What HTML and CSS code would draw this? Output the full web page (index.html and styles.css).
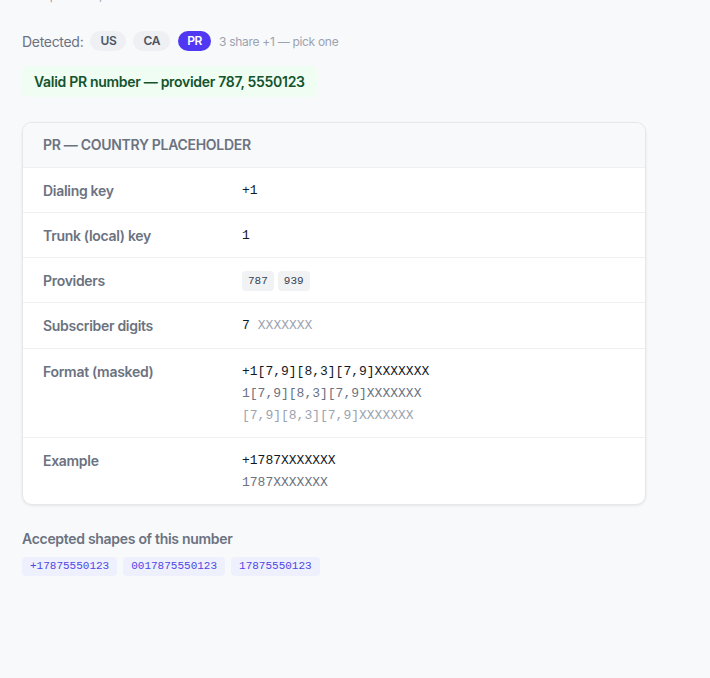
FILE: index.html
```html
<!DOCTYPE html>
<html lang="en">
<head>
    <meta charset="UTF-8">
    <meta name="viewport" content="width=device-width, initial-scale=1.0">
    <title>Dial code lookup</title>
    <link rel="stylesheet" href="styles.css">
</head>
<body>
    <div class="page">
        <p class="accepts">Accepts +ccN, 00ccN or bare ccN</p>

        <div class="detected">
            <span class="detected-label">Detected:</span>
            <span class="chip">US</span>
            <span class="chip">CA</span>
            <span class="chip active">PR</span>
            <span class="detected-hint">3 share +1 — pick one</span>
        </div>

        <div class="status">Valid PR number — provider 787, 5550123</div>

        <div class="card">
            <div class="card-head">PR — Country placeholder</div>
            <div class="row">
                <div class="label">Dialing key</div>
                <div class="value"><div class="mono">+1</div></div>
            </div>
            <div class="row">
                <div class="label">Trunk (local) key</div>
                <div class="value"><div class="mono">1</div></div>
            </div>
            <div class="row">
                <div class="label">Providers</div>
                <div class="value providers">
                    <span class="tag">787</span>
                    <span class="tag">939</span>
                </div>
            </div>
            <div class="row">
                <div class="label">Subscriber digits</div>
                <div class="value subs">
                    <span class="mono">7</span>
                    <span class="mono faint">XXXXXXX</span>
                </div>
            </div>
            <div class="row">
                <div class="label">Format (masked)</div>
                <div class="value">
                    <div class="mono">+1[7,9][8,3][7,9]XXXXXXX</div>
                    <div class="mono muted">1[7,9][8,3][7,9]XXXXXXX</div>
                    <div class="mono faint">[7,9][8,3][7,9]XXXXXXX</div>
                </div>
            </div>
            <div class="row">
                <div class="label">Example</div>
                <div class="value">
                    <div class="mono">+1787XXXXXXX</div>
                    <div class="mono muted">1787XXXXXXX</div>
                </div>
            </div>
        </div>

        <h3 class="shapes-title">Accepted shapes of this number</h3>
        <div class="shapes">
            <span class="shape">+17875550123</span>
            <span class="shape">0017875550123</span>
            <span class="shape">17875550123</span>
        </div>
    </div>
</body>
</html>
```

FILE: styles.css
```css
/* Page */
body {
    margin: 0;
    background: #f8f9fb;
    font-family: Inter, "Noto Sans", sans-serif;
    letter-spacing: -0.3px;
    color: #111827;
    overflow: hidden;
}

.page {
    padding: 0 22px;
    width: 624px;
}

.accepts {
    margin: -12px 0 0;
    font-size: 12px;
    line-height: 16px;
    color: #9ca3af;
}

/* Detected countries */
.detected {
    display: flex;
    align-items: center;
    gap: 7px;
    margin-top: 27px;
    height: 20px;
}
.detected-label {
    font-size: 14px;
    color: #6b7280;
}
.chip {
    font-size: 12px;
    font-weight: 600;
    color: #4b5563;
    background: #eff0f3;
    border-radius: 10px;
    padding: 0 10px;
    line-height: 20px;
}
.chip.active {
    background: #5038f2;
    color: #fff;
    padding: 0 9px;
    margin-left: 1px;
}
.detected-hint {
    font-size: 12px;
    color: #9ca3af;
    margin-left: 1px;
}

.status {
    width: fit-content;
    margin-top: 15px;
    padding: 6px 12px;
    line-height: 19px;
    font-size: 14px;
    font-weight: 600;
    color: #14532d;
    background: #effdf3;
    border-radius: 6px;
}

/* Card */
.card {
    margin-top: 25px;
    background: #fff;
    border: 1px solid #e5e7eb;
    border-radius: 10px;
    box-shadow: 0 1px 3px rgba(0, 0, 0, 0.08);
    overflow: hidden;
}
.card-head {
    background: #f8f9fb;
    padding: 11px 20px 12px;
    line-height: 21px;
    font-size: 14px;
    font-weight: 600;
    text-transform: uppercase;
    color: #6b7280;
    border-bottom: 1px solid #eef0f2;
}
.row {
    display: grid;
    grid-template-columns: 199px 1fr;
    padding: 12px 20px 11px;
    border-bottom: 1px solid #eef0f2;
}
.row:last-child {
    border-bottom: none;
}
.label {
    font-size: 14px;
    font-weight: 600;
    color: #6b7280;
    line-height: 21px;
}
.value {
    display: flex;
    flex-direction: column;
    gap: 1px;
    letter-spacing: 0;
}
.mono {
    font-family: "Liberation Mono", "DejaVu Sans Mono", monospace;
    font-size: 13px;
    line-height: 21px;
    color: #111827;
}
.mono.muted {
    color: #6b7280;
}
.mono.faint {
    color: #9ca3af;
}

.providers {
    flex-direction: row;
    align-items: center;
    gap: 4px;
}
.tag {
    font-family: "Liberation Mono", "DejaVu Sans Mono", monospace;
    font-size: 11px;
    line-height: 20px;
    padding: 0 6px;
    color: #374151;
    background: #f1f2f4;
    border-radius: 4px;
}

.subs {
    flex-direction: row;
    gap: 8px;
    padding-bottom: 1px;
}

/* Accepted shapes */
.shapes-title {
    margin: 24px 0 0;
    font-size: 14px;
    font-weight: 600;
    line-height: 20px;
    color: #6b7280;
}
.shapes {
    display: flex;
    gap: 6px;
    margin-top: 8px;
    letter-spacing: 0;
}
.shape {
    font-family: "Liberation Mono", "DejaVu Sans Mono", monospace;
    font-size: 11px;
    line-height: 19px;
    padding: 0 8px;
    color: #4f46e5;
    background: #eef0fd;
    border-radius: 4px;
}
```
